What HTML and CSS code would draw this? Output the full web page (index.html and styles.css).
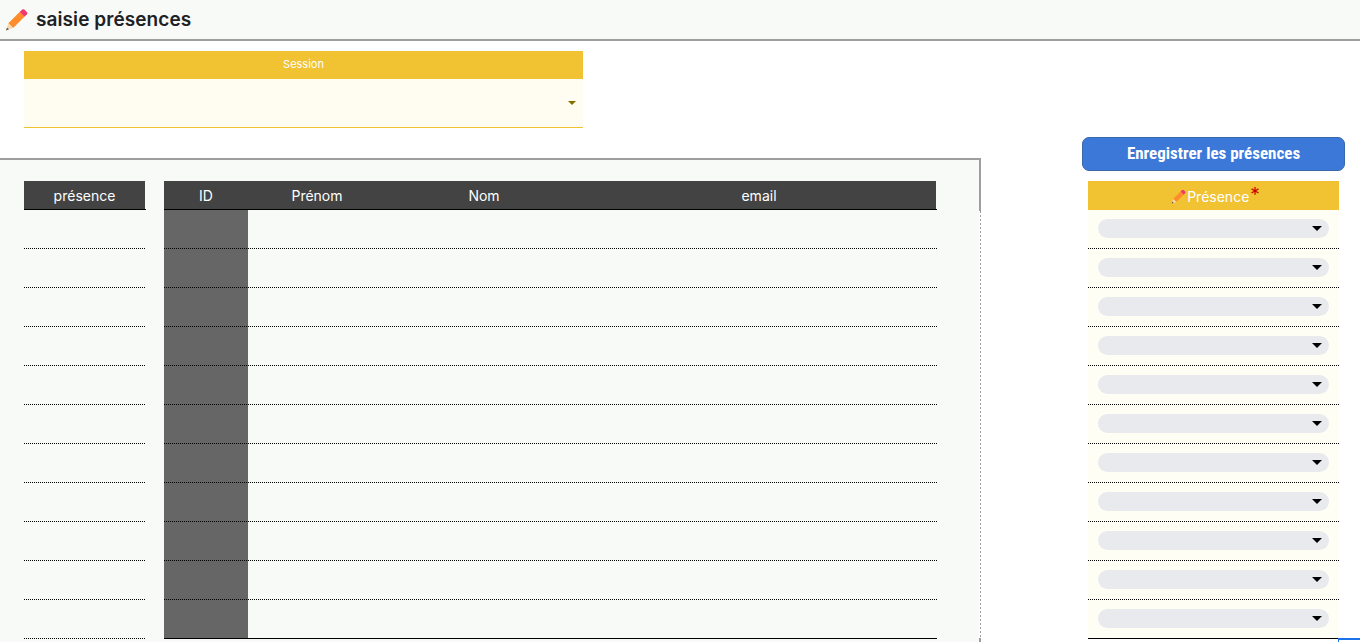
FILE: index.html
```html
<!DOCTYPE html>
<html lang="fr">
<head>
<meta charset="utf-8">
<title>saisie présences</title>
<link rel="stylesheet" href="styles.css">
</head>
<body>
<svg class="defs" width="0" height="0" aria-hidden="true">
  <symbol id="pencil" viewBox="0 0 22 22">
    <path fill="#ff8c2b" d="M3.200 14.600 14 3.800 18.600 8.400 7.800 19.200z"/>
    <path fill="#f3d9b0" d="M3.200 14.600 7.800 19.200 1 21.500z"/>
    <path fill="#5a4a3a" d="M1.900 18.800 3.800 20.300 1 21.500z"/>
    <path fill="#f0386b" d="M14 3.800 16.500 1.500Q17.500.8 18.500 1.500L21 4Q21.700 5 21 6L18.600 8.400z"/>
  </symbol>
</svg>

<header class="topbar">
  <svg class="topbar-icon"><use href="#pencil"/></svg>
  <h1 class="topbar-title">saisie présences</h1>
</header>

<section class="session">
  <div class="session-label">Session</div>
  <div class="session-field"><span class="session-arrow"></span></div>
</section>

<main class="workspace">
  <section class="panel">
    <div class="panel-body">
      <div class="tbl tbl-status">
        <div class="tbl-head"><div class="head-cells status-cells"><span>présence</span></div></div>
        <div class="status-row"></div><div class="status-row"></div><div class="status-row"></div><div class="status-row"></div>
        <div class="status-row"></div><div class="status-row"></div><div class="status-row"></div><div class="status-row"></div>
        <div class="status-row"></div><div class="status-row"></div><div class="status-row"></div>
      </div>
      <div class="tbl tbl-people">
        <div class="tbl-head">
          <div class="head-cells people-cells"><span>ID</span><span>Prénom</span><span>Nom</span><span>email</span></div>
        </div>
        <div class="people-row"></div><div class="people-row"></div><div class="people-row"></div><div class="people-row"></div>
        <div class="people-row"></div><div class="people-row"></div><div class="people-row"></div><div class="people-row"></div>
        <div class="people-row"></div><div class="people-row"></div>
        <div class="people-row people-row-last"></div>
      </div>
    </div>
    <div class="panel-rail"><div class="rail-solid"></div><div class="rail-dashed"></div><div class="rail-end"></div></div>
  </section>

  <aside class="side">
    <button class="save" type="button">Enregistrer les présences</button>
    <div class="picker">
      <div class="picker-head">
        <svg class="picker-icon"><use href="#pencil"/></svg><span class="picker-title">Présence</span><span class="required">*</span>
      </div>
      <div class="picker-row"><div class="pill"></div></div><div class="picker-row"><div class="pill"></div></div>
      <div class="picker-row"><div class="pill"></div></div><div class="picker-row"><div class="pill"></div></div>
      <div class="picker-row"><div class="pill"></div></div><div class="picker-row"><div class="pill"></div></div>
      <div class="picker-row"><div class="pill"></div></div><div class="picker-row"><div class="pill"></div></div>
      <div class="picker-row"><div class="pill"></div></div><div class="picker-row"><div class="pill"></div></div>
      <div class="picker-row picker-row-last"><div class="pill"></div></div>
    </div>
  </aside>
</main>
<div class="selection-corner"></div>
</body>
</html>
```
FILE: styles.css
```css
* { box-sizing: border-box; }
html, body { height: 642px; }
body {
  margin: 0;
  overflow: hidden;
  background: #fff;
  font-family: Inter, "Liberation Sans", sans-serif;
  position: relative;
}
.defs { position: absolute; }

.topbar {
  height: 41px;
  background: #f8faf8;
  border-bottom: 2px solid #9e9e9e;
  display: flex;
  align-items: center;
  padding-left: 5px;
}
.topbar-icon { width: 23px; height: 23px; margin-right: 8px; }
.topbar-title {
  margin: 0;
  font: 600 19px Inter, sans-serif;
  color: #202124;
  letter-spacing: 0.08px;
}

.session { width: 559px; margin: 10px 0 0 24px; }
.session-label {
  height: 28px;
  padding-bottom: 2px;
  background: #f1c232;
  color: #fff;
  font-size: 11px;
  display: flex;
  align-items: center;
  justify-content: center;
}
.session-field {
  height: 49px;
  background: #fffdf1;
  border-bottom: 1px solid #f1c232;
  display: flex;
  align-items: center;
  justify-content: flex-end;
  padding: 0 7px 0 0;
}
.session-arrow {
  width: 0; height: 0;
  border-left: 4px solid transparent;
  border-right: 4px solid transparent;
  border-top: 4px solid #8a6d00;
}

.workspace { display: flex; margin-top: 9px; }

.panel {
  width: 981px;
  height: 484px;
  margin-top: 21px;
  background: #f8faf8;
  border-top: 2px solid #9e9e9e;
  display: flex;
}
.panel-body {
  flex: 1;
  padding: 21px 0 0 24px;
  display: flex;
  gap: 18px;
  align-items: flex-start;
}
.panel-rail { width: 2px; display: flex; flex-direction: column; background: #fff; }
.rail-solid { height: 51px; background: #9e9e9e; }
.rail-dashed {
  flex: 1;
  margin-left: 1px;
  background: repeating-linear-gradient(#9e9e9e 0 2px, transparent 2px 4px);
}
.rail-end { height: 4px; background: #9e9e9e; }

.tbl-status { width: 122px; }
.tbl-people { width: 773px; }
.tbl-head { height: 29px; border-bottom: 1px solid #000; }
.head-cells {
  height: 28px;
  background: #434343;
  color: #fff;
  font-size: 14px;
  align-items: center;
  text-align: center;
}
.status-cells { width: 121px; display: flex; justify-content: center; }
.people-cells {
  width: 772px;
  display: grid;
  grid-template-columns: 84px 138px 196px 354px;
}
.status-row {
  width: 121px;
  height: 39px;
  border-bottom: 1px dotted #000;
}
.people-row {
  height: 39px;
  border-bottom: 1px dotted #000;
  background: linear-gradient(90deg, #666 84px, transparent 84px);
}
.people-row-last { border-bottom: 1px solid #000; }

.side { margin-left: 101px; width: 263px; }
.save {
  display: block;
  width: 263px;
  height: 34px;
  padding: 0 0 2px;
  background: #3c78d8;
  border: 1px solid #3a68ad;
  border-radius: 7px;
  color: #fff;
  font: 700 17px "Liberation Sans Narrow", "Roboto Condensed", "Liberation Sans", sans-serif;
}
.picker { width: 251px; margin: 10px 0 0 6px; }
.picker-head {
  height: 29px;
  padding-left: 4px;
  background: #f1c232;
  color: #fff;
  font-size: 14px;
  display: flex;
  align-items: center;
  justify-content: center;
}
.picker-title { margin-top: 2px; }
.picker-icon { width: 15px; height: 15px; margin-right: 1px; margin-top: 2px; }
.required {
  color: #cc0000;
  font-size: 19px;
  font-weight: 400;
  line-height: 1;
  margin: -3px 0 0 1px;
  height: 19px;
}
.picker-row {
  height: 39px;
  background: #fffef5;
  border-bottom: 1px dotted #000;
  padding: 9px 10px 0;
}
.picker-row-last { border-bottom: 1px solid #000; }
.pill {
  position: relative;
  height: 19px;
  border-radius: 10px;
  background: #e8eaed;
}
.pill::after {
  content: "";
  position: absolute;
  right: 7px;
  top: 7px;
  width: 0; height: 0;
  border-left: 5px solid transparent;
  border-right: 5px solid transparent;
  border-top: 5px solid #000;
}
.selection-corner {
  position: absolute;
  left: 1338px;
  top: 638px;
  width: 22px;
  height: 4px;
  border-top: 2px solid #1a73e8;
  border-left: 1px solid #1a73e8;
}
```
